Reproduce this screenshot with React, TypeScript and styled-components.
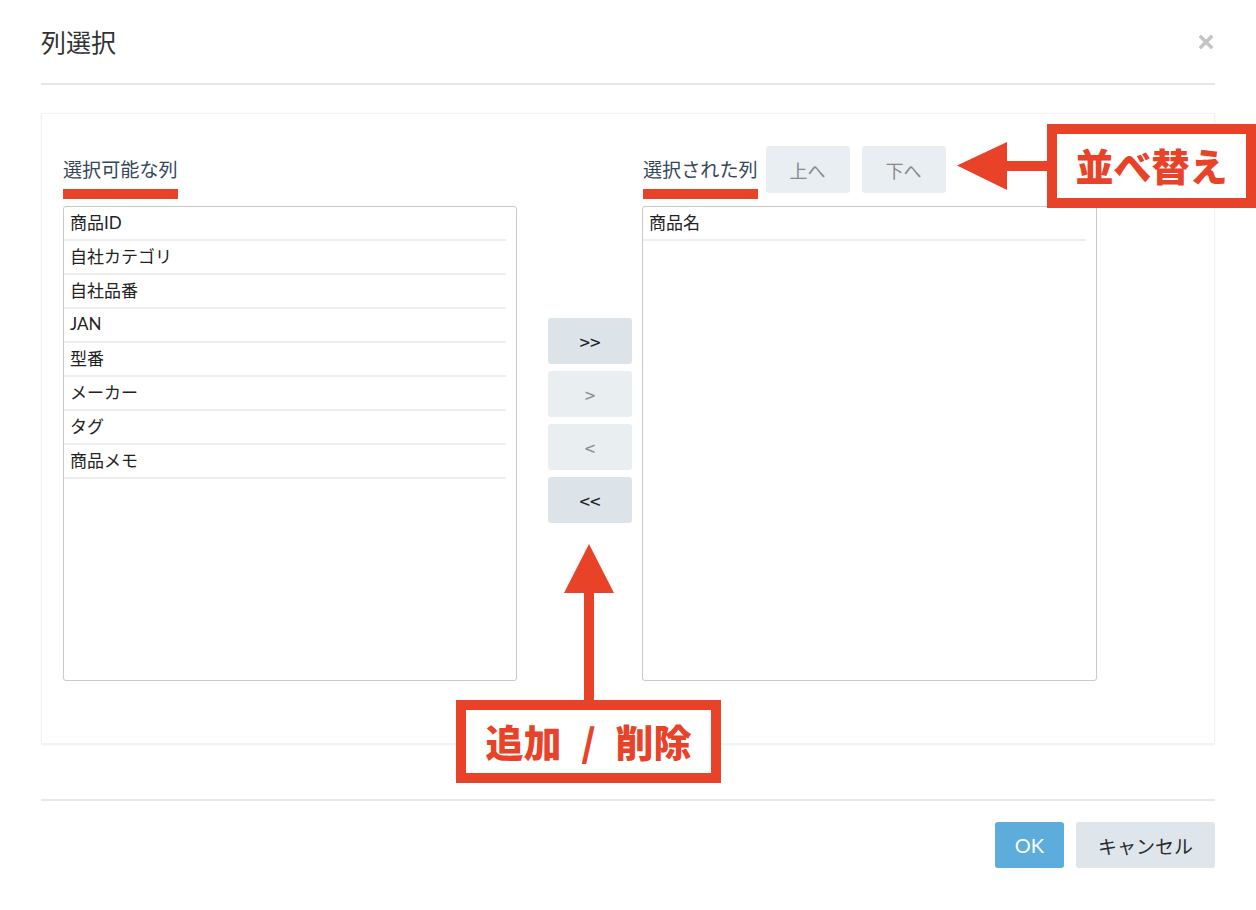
import styled, { createGlobalStyle } from 'styled-components'

const GlobalStyle = createGlobalStyle`
  body {
    margin: 0;
    background: #fff;
    font-family: Lato, "Noto Sans CJK JP", sans-serif;
    color: #222;
  }
`

const RED = '#e84229'

const Modal = styled.div`
  position: relative;
  width: 1256px;
  height: 910px;
  box-sizing: border-box;
  padding: 0 41px;
`

const Header = styled.header`
  height: 83px;
  display: flex;
  align-items: center;
  justify-content: space-between;
  border-bottom: 2px solid #e6e6e6;
`

const Title = styled.h1`
  margin: 0;
  font-size: 25px;
  font-weight: 400;
  color: #333;
  padding-bottom: 2px;
`

const CloseButton = styled.button`
  border: 0;
  background: none;
  padding: 0;
  margin-right: 2px;
  width: 14px;
  height: 14px;
  display: flex;
  cursor: pointer;
`

const Panel = styled.section`
  margin-top: 28px;
  border: 1px solid #f3f3f3;
  box-shadow: 0 1px 2px rgba(0, 0, 0, 0.07);
  padding: 32px 21px 62px;
`

const Columns = styled.div`
  display: flex;
  align-items: flex-start;
`

const Column = styled.div<{ $width: number }>`
  width: ${p => p.$width}px;
  display: flex;
  flex-direction: column;
`

const ColumnHead = styled.div`
  height: 47px;
  display: flex;
  align-items: center;
`

const Label = styled.span<{ $inset?: number }>`
  position: relative;
  margin-left: ${p => p.$inset ?? 0}px;
  font-size: 19.1px;
  line-height: 28px;
  color: #35475a;

  &::after {
    content: '';
    position: absolute;
    left: 0;
    right: 0;
    top: 33px;
    height: 10px;
    background: ${RED};
  }
`

const SortButton = styled.button<{ $gap: number }>`
  margin-left: ${p => p.$gap}px;
  width: 84px;
  height: 47px;
  border: 0;
  border-radius: 3px;
  background: #e8eef2;
  color: #8a8a8a;
  font-family: inherit;
  font-size: 18px;
`

const ListBox = styled.div`
  margin-top: 13px;
  height: 475px;
  box-sizing: border-box;
  border: 1px solid #c9c9c9;
  border-radius: 3px;
  padding-right: 10px;
`

const List = styled.ul`
  list-style: none;
  margin: 0;
  padding: 0;
`

const Item = styled.li`
  display: flex;
  align-items: center;
  padding: 0 0 3px 6px;
  box-sizing: border-box;
  height: 34px;
  font-size: 17px;
  color: #222;
  border-bottom: 2px solid #eeeeee;
`

const MoveButtons = styled.div`
  margin: 172px 10px 0 31px;
  width: 84px;
  display: flex;
  flex-direction: column;
  gap: 7px;
`

const MoveButton = styled.button<{ $disabled?: boolean }>`
  height: 46px;
  border: 0;
  border-radius: 3px;
  background: ${p => (p.$disabled ? '#e9eef1' : '#dce4ea')};
  color: ${p => (p.$disabled ? '#8f8f8f' : '#222')};
  font-family: "Noto Sans CJK JP", sans-serif;
  font-size: 19px;
`

const Footer = styled.footer`
  margin-top: 55px;
  border-top: 2px solid #e8e8e8;
  padding-top: 21px;
  display: flex;
  justify-content: flex-end;
  gap: 12px;
`

const FooterButton = styled.button<{ $primary?: boolean }>`
  height: 46px;
  padding: 0;
  width: ${p => (p.$primary ? 69 : 139)}px;
  border: 0;
  border-radius: 3px;
  background: ${p => (p.$primary ? '#5caddb' : '#dfe6eb')};
  color: ${p => (p.$primary ? '#fff' : '#2a2a2a')};
  font-family: inherit;
  font-size: ${p => (p.$primary ? 20 : 19)}px;
`

/* annotations drawn over the dialog */

const Callout = styled.div<{ $left: number; $top: number; $w: number; $h: number }>`
  position: absolute;
  left: ${p => p.$left}px;
  top: ${p => p.$top}px;
  width: ${p => p.$w}px;
  height: ${p => p.$h}px;
  box-sizing: border-box;
  border: 10px solid ${RED};
  background: #fff;
  display: flex;
  align-items: center;
  justify-content: center;
  padding-bottom: 3px;
  color: ${RED};
  font-family: "Noto Sans CJK JP", sans-serif;
  font-weight: 900;
  font-size: 38px;
  word-spacing: 11px;
`

const Arrow = styled.svg<{ $left: number; $top: number }>`
  position: absolute;
  left: ${p => p.$left}px;
  top: ${p => p.$top}px;
`

const available = ['商品ID', '自社カテゴリ', '自社品番', 'JAN', '型番', 'メーカー', 'タグ', '商品メモ']
const selected = ['商品名']

export default function App() {
  return (
    <Modal>
      <GlobalStyle />
      <Header>
        <Title>列選択</Title>
        <CloseButton aria-label="close">
          <svg width="14" height="14" viewBox="0 0 14 14">
            <path d="M2 2 L12 12 M12 2 L2 12" stroke="#c4c4c4" strokeWidth="3.4" strokeLinecap="square" />
          </svg>
        </CloseButton>
      </Header>

      <Panel>
        <Columns>
          <Column $width={454}>
            <ColumnHead>
              <Label>選択可能な列</Label>
            </ColumnHead>
            <ListBox>
              <List>
                {available.map(name => (
                  <Item key={name}>{name}</Item>
                ))}
              </List>
            </ListBox>
          </Column>

          <MoveButtons>
            <MoveButton>&gt;&gt;</MoveButton>
            <MoveButton $disabled>&gt;</MoveButton>
            <MoveButton $disabled>&lt;</MoveButton>
            <MoveButton>&lt;&lt;</MoveButton>
          </MoveButtons>

          <Column $width={455}>
            <ColumnHead>
              <Label $inset={1}>選択された列</Label>
              <SortButton $gap={8}>上へ</SortButton>
              <SortButton $gap={12}>下へ</SortButton>
            </ColumnHead>
            <ListBox>
              <List>
                {selected.map(name => (
                  <Item key={name}>{name}</Item>
                ))}
              </List>
            </ListBox>
          </Column>
        </Columns>
      </Panel>

      <Footer>
        <FooterButton $primary>OK</FooterButton>
        <FooterButton>キャンセル</FooterButton>
      </Footer>

      <Arrow $left={957} $top={142} width="90" height="48" viewBox="0 0 90 48">
        <polygon points="0,23.5 50,0 50,48" fill={RED} />
        <rect x="49" y="19" width="41" height="10" fill={RED} />
      </Arrow>
      <Callout $left={1047} $top={124} $w={209} $h={84}>並べ替え</Callout>

      <Arrow $left={564} $top={544} width="50" height="157" viewBox="0 0 50 157">
        <polygon points="25,0 0,49 50,49" fill={RED} />
        <rect x="20" y="48" width="10" height="109" fill={RED} />
      </Arrow>
      <Callout $left={456} $top={700} $w={265} $h={83}>追加 / 削除</Callout>
    </Modal>
  )
}
